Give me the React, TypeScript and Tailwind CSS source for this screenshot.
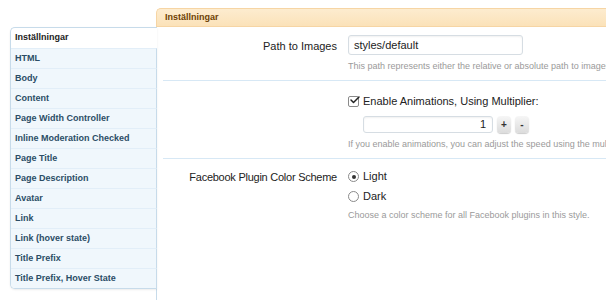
import { Check } from "lucide-react";

const tabs = [
  "HTML",
  "Body",
  "Content",
  "Page Width Controller",
  "Inline Moderation Checked",
  "Page Title",
  "Page Description",
  "Avatar",
  "Link",
  "Link (hover state)",
  "Title Prefix",
  "Title Prefix, Hover State",
];

function Hint({ children }: { children: React.ReactNode }) {
  return <p className="mt-[5px] whitespace-nowrap text-[9px] leading-[12px] text-[#9a9a9a]">{children}</p>;
}

export default function App() {
  return (
    <div
      className="relative flex h-[300px] w-[606px] overflow-hidden bg-white text-[#222]"
      style={{ fontFamily: '"Liberation Sans", Arial, sans-serif' }}
    >
      {/* vertical tabs */}
      <div className="relative z-10 w-[157px] shrink-0 pl-[10px] pt-[27px]">
        <ul className="w-[147px] overflow-hidden rounded-l-[5px] border-y border-l border-[#c7dbea] bg-white shadow-[0_1px_2px_rgba(0,0,0,0.08)]">
          <li className="flex h-[20px] items-center px-[4px] text-[9px] font-bold text-[#222]">Inställningar</li>
          {tabs.map((t) => (
            <li
              key={t}
              className="flex h-[20px] items-center border-t border-r border-t-[#e2eef8] border-r-[#c7dbea] bg-[#f0f7fc] px-[4px] text-[9px] font-bold text-[#2b4d66]"
            >
              {t}
            </li>
          ))}
        </ul>
      </div>

      {/* main panel */}
      <div className="-ml-px flex min-w-0 flex-1 flex-col pt-[8px]">
        <div className="flex h-[19px] shrink-0 items-center rounded-tl-[5px] border border-r-0 border-[#f6d5a4] bg-gradient-to-b from-[#fdeccf] to-[#fbe2b9] pl-[8px] text-[9px] font-bold text-[#6d3f03]">
          Inställningar
        </div>
        <div className="flex-1 border-l border-[#c7dbea]">
          {/* row 1 */}
          <div className="ml-[6px] grid grid-cols-[174px_1fr] gap-x-[11px] border-b border-[#d7e8f5] pt-[8px] pb-[8px]">
            <div className="pt-[3px] text-right text-[11px]">Path to Images</div>
            <div className="min-w-0">
              <div className="flex h-[20px] w-[175px] items-center rounded-[3px] border border-[#d6dde3] bg-white px-[5px] text-[11px] shadow-[inset_0_1px_2px_rgba(0,0,0,0.06)]">
                styles/default
              </div>
              <Hint>This path represents either the relative or absolute path to images used in this style.</Hint>
            </div>
          </div>

          {/* row 2 */}
          <div className="ml-[6px] grid grid-cols-[174px_1fr] gap-x-[11px] border-b border-[#d7e8f5] pt-[12px] pb-[8px]">
            <div />
            <div className="min-w-0">
              <label className="flex items-center gap-[4px] whitespace-nowrap text-[11px]">
                <span className="relative h-[11px] w-[11px] rounded-[2px] border border-[#8a8a8a] bg-white">
                  <Check size={12} strokeWidth={3} className="absolute -top-[3px] left-0 text-[#222]" />
                </span>
                Enable Animations, Using Multiplier:
              </label>
              <div className="mt-[6px] flex items-center gap-[4px] pl-[15px]">
                <div className="flex h-[17px] w-[130px] items-center justify-end rounded-[3px] border border-[#d6dde3] bg-white px-[6px] text-[11px] shadow-[inset_0_1px_2px_rgba(0,0,0,0.06)]">
                  1
                </div>
                <span className="flex h-[17px] w-[14px] items-center justify-center rounded-[4px] bg-gradient-to-b from-[#f6f6f6] to-[#dcdcdc] text-[10px] font-bold text-[#333] shadow-[0_1px_1px_rgba(0,0,0,0.2)]">
                  +
                </span>
                <span className="flex h-[17px] w-[14px] items-center justify-center rounded-[4px] bg-gradient-to-b from-[#f6f6f6] to-[#dcdcdc] text-[10px] font-bold text-[#333] shadow-[0_1px_1px_rgba(0,0,0,0.2)]">
                  -
                </span>
              </div>
              <Hint>If you enable animations, you can adjust the speed using the multiplier.</Hint>
            </div>
          </div>

          {/* row 3 */}
          <div className="ml-[6px] grid grid-cols-[174px_1fr] gap-x-[11px] pt-[11px]">
            <div className="text-right text-[11px] leading-[14px] tracking-[-0.25px]">Facebook Plugin Color Scheme</div>
            <div className="min-w-0">
              <div className="flex h-[14px] items-center gap-[4px] text-[11px]">
                <span className="flex h-[11px] w-[11px] items-center justify-center rounded-full border border-[#8a8a8a] bg-white">
                  <span className="h-[4px] w-[4px] rounded-full bg-[#333]" />
                </span>
                Light
              </div>
              <div className="mt-[6px] flex h-[14px] items-center gap-[4px] text-[11px]">
                <span className="h-[11px] w-[11px] rounded-full border border-[#8a8a8a] bg-white" />
                Dark
              </div>
              <Hint>Choose a color scheme for all Facebook plugins in this style.</Hint>
            </div>
          </div>
        </div>
      </div>
    </div>
  );
}
